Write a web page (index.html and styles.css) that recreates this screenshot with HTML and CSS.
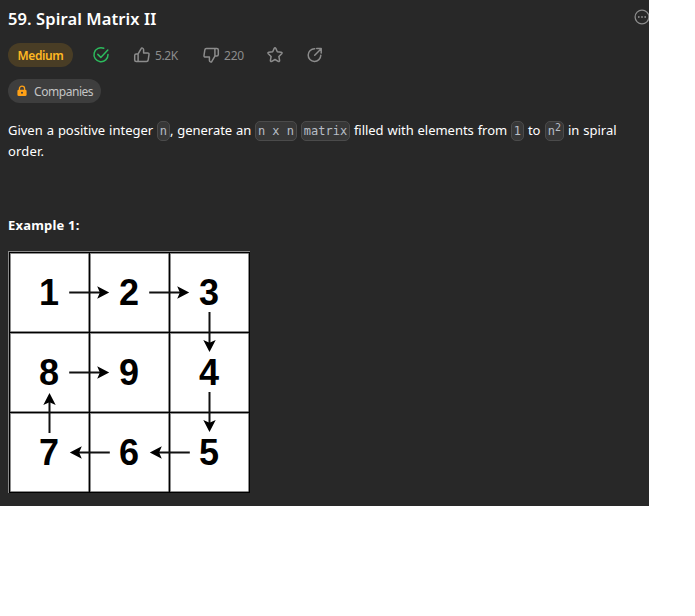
FILE: index.html
```html
<!DOCTYPE html>
<html lang="en">
<head>
<meta charset="utf-8">
<title>59. Spiral Matrix II</title>
<link rel="stylesheet" href="styles.css">
</head>
<body>
<main class="panel">
  <header class="head">
    <h1 class="title">59. Spiral Matrix II</h1>
    <svg class="more" width="16" height="16" viewBox="0 0 16 16"><circle cx="8" cy="8" r="6.9" fill="none" stroke="currentColor" stroke-width="1.3"/><g fill="currentColor"><circle cx="4.8" cy="8" r=".9"/><circle cx="8" cy="8" r=".9"/><circle cx="11.2" cy="8" r=".9"/></g></svg>
  </header>
  <div class="meta">
    <span class="pill medium">Medium</span>
    <svg class="icon solved" viewBox="0 0 18 18"><path d="M11.8 2.3A7 7 0 1 0 16 8.5"/><path d="M5.8 8.4l3 3L15.8 4"/></svg>
    <span class="vote up"><svg class="icon" viewBox="0 0 18 18"><path d="M5.1 7.9 8.3 2.4c.3-.7 2.3-.5 2.3 1.4v3.1h4c.9 0 1.5.7 1.4 1.6l-.8 5.4c-.1.9-.8 1.5-1.6 1.5H3.2c-.9 0-1.5-.6-1.5-1.5V9.4c0-.9.6-1.5 1.5-1.5h1.9v7.5"/></svg><span class="count likes">5.2K</span></span>
    <span class="vote down"><svg class="icon flip" viewBox="0 0 18 18"><path d="M5.1 7.9 8.3 2.4c.3-.7 2.3-.5 2.3 1.4v3.1h4c.9 0 1.5.7 1.4 1.6l-.8 5.4c-.1.9-.8 1.5-1.6 1.5H3.2c-.9 0-1.5-.6-1.5-1.5V9.4c0-.9.6-1.5 1.5-1.5h1.9v7.5"/></svg><span class="count">220</span></span>
    <svg class="icon star" viewBox="0 0 18 18"><path d="M8.2 2.4q.8-1.4 1.6 0l1.5 3.3 3.9.5q1.5.4.5 1.5l-2.8 2.8.7 3.9q0 1.5-1.4.9L9 13.5l-3.2 1.8q-1.4.6-1.4-.9l.7-3.9-2.8-2.8q-1-1.1.5-1.5l3.9-.5z"/></svg>
    <svg class="icon share" viewBox="0 0 18 18"><path d="M8.7 2.8A6.3 6.3 0 1 0 14.8 9.2M8.7 9.2l6-6M10.7 2.5h4.5V7"/></svg>
  </div>
  <div class="tags">
    <span class="pill companies"><svg width="12" height="12" viewBox="0 0 12 12"><path d="M3.4 5V3.8a2.6 2.6 0 0 1 5.2 0V5" fill="none" stroke="#ffa116" stroke-width="1.3"/><rect x="1.4" y="4.7" width="9.2" height="6.4" rx="1.4" fill="#ffa116"/><circle cx="6" cy="7.8" r="1" fill="#3e3e3e"/></svg><span>Companies</span></span>
  </div>
  <p class="prose"><span class="s1">Given a positive integer</span> <code class="one">n</code><span class="s2">, generate an</span> <code class="nxn">n x n</code> <code class="word">matrix</code> <span class="s3">filled with elements from</span> <code class="one">1</code> <span class="s4">to</span> <code class="sq">n<sup>2</sup></code> <span class="s5">in spiral</span><br><span class="s6">order.</span></p>
  <h2 class="example">Example 1:</h2>
  <svg class="matrix" width="242" height="242" viewBox="8 251 242 242">
    <defs>
      <g id="arrow"><path d="M-20 0H12" stroke="#111" stroke-width="2"/><path d="M20 0 8-6.2 10.7 0 8 6.2z"/></g>
    </defs>
    <rect x="8" y="251" width="242" height="242" fill="#8a8a8a"/>
    <rect x="9" y="252" width="241" height="241" fill="#000"/>
    <g fill="#fff" stroke="#999" stroke-width=".5">
      <rect x="10.5" y="253.5" width="78" height="78"/><rect x="90.5" y="253.5" width="78" height="78"/><rect x="170.5" y="253.5" width="78" height="78"/>
      <rect x="10.5" y="333.5" width="78" height="78"/><rect x="90.5" y="333.5" width="78" height="78"/><rect x="170.5" y="333.5" width="78" height="78"/>
      <rect x="10.5" y="413.5" width="78" height="78"/><rect x="90.5" y="413.5" width="78" height="78"/><rect x="170.5" y="413.5" width="78" height="78"/>
    </g>
    <use href="#arrow" transform="translate(89.2 292.5)"/>
    <use href="#arrow" transform="translate(169.2 292.5)"/>
    <use href="#arrow" transform="translate(89.2 372.5)"/>
    <use href="#arrow" transform="translate(209.5 332) rotate(90)"/>
    <use href="#arrow" transform="translate(209.5 412) rotate(90)"/>
    <use href="#arrow" transform="translate(169.8 452.5) rotate(180)"/>
    <use href="#arrow" transform="translate(89.8 452.5) rotate(180)"/>
    <use href="#arrow" transform="translate(49.5 413) rotate(-90)"/>
    <g class="digits">
      <text x="49" y="305">1</text><text x="129" y="305">2</text><text x="209" y="305">3</text>
      <text x="49" y="385">8</text><text x="129" y="385">9</text><text x="209" y="385">4</text>
      <text x="49" y="465">7</text><text x="129" y="465">6</text><text x="209" y="465">5</text>
    </g>
  </svg>
</main>
</body>
</html>
```
FILE: styles.css
```css
* { box-sizing: border-box; }
body { margin: 0; background: #fff; font-family: "Noto Sans", "Open Sans", sans-serif; }
.panel { width: 649px; height: 506px; padding: 8px 0 0 8px; background: #282828; color: #fff; overflow: hidden; }
.head { display: flex; justify-content: space-between; height: 20px; }
.title { margin: 0; font-size: 16.5px; line-height: 21px; font-weight: 600; letter-spacing: .1px; white-space: nowrap; }
.more { margin: 1px -1px 0 0; color: #8c8c8c; flex: none; }
.meta { display: flex; align-items: center; height: 24px; margin-top: 15px; color: #8c8c8c; }
.pill { display: inline-flex; align-items: center; height: 24px; border-radius: 12px; }
.medium { width: 65px; justify-content: center; background: #493d25; color: #ffb822; font-size: 12px; font-weight: 600; letter-spacing: -.4px; }
.icon { width: 18px; height: 18px; fill: none; stroke: currentColor; stroke-width: 1.5; stroke-linecap: round; stroke-linejoin: round; flex: none; }
.solved { margin-left: 19px; color: #2cbb5d; stroke-width: 1.5; }
.vote { display: flex; align-items: center; gap: 4px; font-size: 12px; }
.up { width: 69px; margin-left: 23px; }
.down { width: 45px; }
.count { letter-spacing: -.2px; }
.likes { letter-spacing: -.4px; }
.flip { transform: rotate(180deg); }
.star { margin-left: 19px; }
.share { margin-left: 22px; }
.tags { display: flex; margin-top: 12px; }
.companies { width: 93px; padding-left: 8px; gap: 6px; background: #3e3e3e; color: #c4c4c4; font-size: 12px; letter-spacing: -.45px; }
.prose { margin: 17px 0 0; font-size: 13px; line-height: 21px; white-space: nowrap; word-spacing: .6px; }
.prose > span { display: inline-block; }
.s1 { width: 145px; letter-spacing: -.02px; }
.s2 { width: 81px; letter-spacing: -.05px; }
.s3 { width: 153px; letter-spacing: -.04px; }
.s4 { width: 13px; }
.s5 { width: 48px; }
.s6 { letter-spacing: .2px; }
code { display: inline-block; height: 20px; border: 1px solid #4b4b4b; border-radius: 5px; background: #373737; color: #b8bec6; font: 12px/18px "DejaVu Sans Mono", monospace; text-align: center; vertical-align: middle; margin-top: -1px; word-spacing: 0; }
.one { width: 13px; }
.nxn { width: 42px; }
.word { width: 49px; }
.sq { width: 19px; }
sup { font-size: 10px; line-height: 0; vertical-align: 4px; }
.example { margin: 53px 0 0; font-size: 13px; line-height: 21px; font-weight: 700; letter-spacing: .2px; }
.matrix { display: block; margin-top: 15px; }
.digits { font: 700 36px "Liberation Sans", Arial, sans-serif; text-anchor: middle; fill: #000; }
```
